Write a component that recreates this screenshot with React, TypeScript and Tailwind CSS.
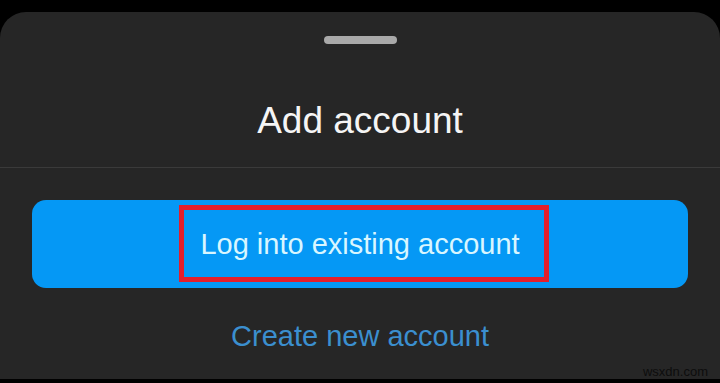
export default function App() {
  return (
    <div className="relative h-[383px] w-[720px] overflow-hidden bg-black pt-[12px] font-['Liberation_Sans',Arial,sans-serif]">
      <div className="flex h-[367px] flex-col rounded-t-[26px] bg-[#262626]">
        {/* drag handle */}
        <div className="mx-auto mt-[24px] h-[8px] w-[73px] rounded-full bg-[#a9a9a9]" />

        <h1 className="mt-[55px] text-center text-[37px] leading-[44px] text-[#f5f5f5]">Add account</h1>

        <div className="mt-[24px] h-px bg-[#3a3a3a]" />

        <div className="relative mx-[32px] mt-[32px] flex h-[88px] items-center justify-center rounded-[14px] bg-[#0598f5]">
          <span className="text-[29px] leading-[32px] text-[#d9f6ff]">Log into existing account</span>
          {/* annotation box */}
          <div className="absolute left-[147px] top-[5px] h-[77px] w-[370px] border-[5px] border-[#e41e2b]" />
        </div>

        <p className="mt-[30px] text-center text-[29px] leading-[36px] text-[#3b8fcf]">Create new account</p>
      </div>

      <span className="absolute right-[12px] top-[364px] text-[13px] leading-[16px] text-[#0d0d0d]">wsxdn.com</span>
    </div>
  );
}
